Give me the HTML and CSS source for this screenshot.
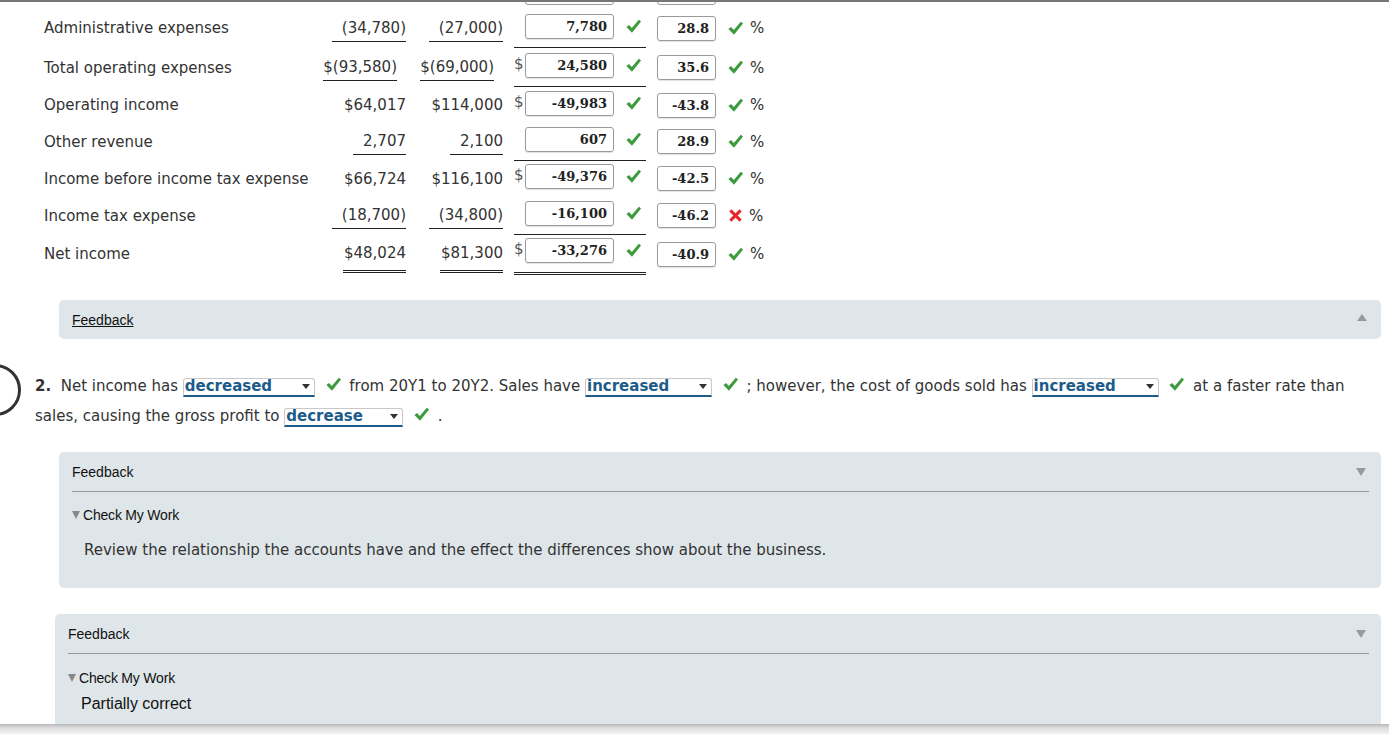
FILE: index.html
```html
<!DOCTYPE html>
<html lang="en">
<head>
    <meta charset="UTF-8">
    <title>Horizontal Analysis</title>
    <link rel="stylesheet" href="styles.css">
</head>
<body>
    <div class="page">
        <div class="stub">
            <span class="stub-box wide"></span>
            <span class="stub-box narrow"></span>
        </div>

        <div class="stmt">
            <div class="row r1">
                <div class="label">Administrative expenses</div>
                <div class="amt"><span class="ul">(34,780)</span></div>
                <div class="amt"><span class="ul">(27,000)</span></div>
                <div class="ans line"><span class="cur"></span><span class="box">7,780</span><svg class="ok" viewBox="0 0 18 18"><path d="M1.5 9.6 L4.3 7.3 L7.2 10.7 L14.6 1.8 L17 3.8 L7.4 15.6 Z"/></svg></div>
                <div class="pct"><span class="box sm">28.8</span><svg class="ok" viewBox="0 0 18 18"><path d="M1.5 9.6 L4.3 7.3 L7.2 10.7 L14.6 1.8 L17 3.8 L7.4 15.6 Z"/></svg><span class="pc">%</span></div>
            </div>
            <div class="row r2">
                <div class="label">Total operating expenses</div>
                <div class="amt"><span class="ul tight">$(93,580)</span></div>
                <div class="amt"><span class="ul tight">$(69,000)</span></div>
                <div class="ans line"><span class="cur">$</span><span class="box">24,580</span><svg class="ok" viewBox="0 0 18 18"><path d="M1.5 9.6 L4.3 7.3 L7.2 10.7 L14.6 1.8 L17 3.8 L7.4 15.6 Z"/></svg></div>
                <div class="pct"><span class="box sm">35.6</span><svg class="ok" viewBox="0 0 18 18"><path d="M1.5 9.6 L4.3 7.3 L7.2 10.7 L14.6 1.8 L17 3.8 L7.4 15.6 Z"/></svg><span class="pc">%</span></div>
            </div>
            <div class="row r3">
                <div class="label">Operating income</div>
                <div class="amt"><span>$64,017</span></div>
                <div class="amt"><span>$114,000</span></div>
                <div class="ans"><span class="cur">$</span><span class="box">-49,983</span><svg class="ok" viewBox="0 0 18 18"><path d="M1.5 9.6 L4.3 7.3 L7.2 10.7 L14.6 1.8 L17 3.8 L7.4 15.6 Z"/></svg></div>
                <div class="pct"><span class="box sm">-43.8</span><svg class="ok" viewBox="0 0 18 18"><path d="M1.5 9.6 L4.3 7.3 L7.2 10.7 L14.6 1.8 L17 3.8 L7.4 15.6 Z"/></svg><span class="pc">%</span></div>
            </div>
            <div class="row r4">
                <div class="label">Other revenue</div>
                <div class="amt"><span class="ul">2,707</span></div>
                <div class="amt"><span class="ul">2,100</span></div>
                <div class="ans line"><span class="cur"></span><span class="box">607</span><svg class="ok" viewBox="0 0 18 18"><path d="M1.5 9.6 L4.3 7.3 L7.2 10.7 L14.6 1.8 L17 3.8 L7.4 15.6 Z"/></svg></div>
                <div class="pct"><span class="box sm">28.9</span><svg class="ok" viewBox="0 0 18 18"><path d="M1.5 9.6 L4.3 7.3 L7.2 10.7 L14.6 1.8 L17 3.8 L7.4 15.6 Z"/></svg><span class="pc">%</span></div>
            </div>
            <div class="row r5">
                <div class="label">Income before income tax expense</div>
                <div class="amt"><span>$66,724</span></div>
                <div class="amt"><span>$116,100</span></div>
                <div class="ans"><span class="cur">$</span><span class="box">-49,376</span><svg class="ok" viewBox="0 0 18 18"><path d="M1.5 9.6 L4.3 7.3 L7.2 10.7 L14.6 1.8 L17 3.8 L7.4 15.6 Z"/></svg></div>
                <div class="pct"><span class="box sm">-42.5</span><svg class="ok" viewBox="0 0 18 18"><path d="M1.5 9.6 L4.3 7.3 L7.2 10.7 L14.6 1.8 L17 3.8 L7.4 15.6 Z"/></svg><span class="pc">%</span></div>
            </div>
            <div class="row r6">
                <div class="label">Income tax expense</div>
                <div class="amt"><span class="ul">(18,700)</span></div>
                <div class="amt"><span class="ul">(34,800)</span></div>
                <div class="ans line"><span class="cur"></span><span class="box">-16,100</span><svg class="ok" viewBox="0 0 18 18"><path d="M1.5 9.6 L4.3 7.3 L7.2 10.7 L14.6 1.8 L17 3.8 L7.4 15.6 Z"/></svg></div>
                <div class="pct"><span class="box sm">-46.2</span><svg class="bad" viewBox="0 0 16 16"><path d="M2.5 2.5 L13.5 13.5 M13.5 2.5 L2.5 13.5"/></svg><span class="pc">%</span></div>
            </div>
            <div class="row r7">
                <div class="label">Net income</div>
                <div class="amt"><span class="dbl">$48,024</span></div>
                <div class="amt"><span class="dbl">$81,300</span></div>
                <div class="ans dline"><span class="cur">$</span><span class="box">-33,276</span><svg class="ok" viewBox="0 0 18 18"><path d="M1.5 9.6 L4.3 7.3 L7.2 10.7 L14.6 1.8 L17 3.8 L7.4 15.6 Z"/></svg></div>
                <div class="pct"><span class="box sm">-40.9</span><svg class="ok" viewBox="0 0 18 18"><path d="M1.5 9.6 L4.3 7.3 L7.2 10.7 L14.6 1.8 L17 3.8 L7.4 15.6 Z"/></svg><span class="pc">%</span></div>
            </div>
        </div>

        <div class="feedback collapsed">
            <a class="fb-title link">Feedback</a>
            <span class="tri up"></span>
        </div>

        <div class="question">
            <span class="circle"></span>
            <b>2.</b>&nbsp; Net income has <span class="sel w-dec"><span>decreased</span><i></i></span>
            <svg class="ok" viewBox="0 0 18 18"><path d="M1.5 9.6 L4.3 7.3 L7.2 10.7 L14.6 1.8 L17 3.8 L7.4 15.6 Z"/></svg>
            from 20Y1 to 20Y2. Sales have <span class="sel w-inc"><span>increased</span><i></i></span>
            <svg class="ok" viewBox="0 0 18 18"><path d="M1.5 9.6 L4.3 7.3 L7.2 10.7 L14.6 1.8 L17 3.8 L7.4 15.6 Z"/></svg>
            ; however, the cost of goods sold has <span class="sel w-inc"><span>increased</span><i></i></span>
            <svg class="ok" viewBox="0 0 18 18"><path d="M1.5 9.6 L4.3 7.3 L7.2 10.7 L14.6 1.8 L17 3.8 L7.4 15.6 Z"/></svg>
            at a faster rate than sales, causing the gross profit to <span class="sel w-dcr"><span>decrease</span><i></i></span>
            <svg class="ok" viewBox="0 0 18 18"><path d="M1.5 9.6 L4.3 7.3 L7.2 10.7 L14.6 1.8 L17 3.8 L7.4 15.6 Z"/></svg> .
        </div>

        <div class="feedback open">
            <div class="fb-head">
                <span class="fb-title">Feedback</span>
                <span class="tri down"></span>
            </div>
            <div class="cmw"><span class="tri small"></span>Check My Work</div>
            <p class="fb-text">Review the relationship the accounts have and the effect the differences show about the business.</p>
        </div>

        <div class="feedback open last">
            <div class="fb-head">
                <span class="fb-title">Feedback</span>
                <span class="tri down"></span>
            </div>
            <div class="cmw"><span class="tri small"></span>Check My Work</div>
            <p class="partial">Partially correct</p>
        </div>
    </div>

    <div class="bottom-shade"></div>
</body>
</html>
```

FILE: styles.css
```css
html, body {
    height: 734px;
    overflow: hidden;
}

body {
    margin: 0;
    font-family: 'DejaVu Sans', Verdana, sans-serif;
    font-size: 15px;
    color: #333;
    background-color: white;
}

.page {
    border-top: 2px solid #777;
}

/* bottom edges of the row above, scrolled out of view */
.stub {
    display: flex;
    height: 3px;
    overflow: hidden;
    align-items: flex-end;
    padding-left: 525px;
}

.stub-box {
    display: block;
    height: 20px;
    border: 1px solid #999;
    border-radius: 3px;
    box-sizing: border-box;
}

.stub-box.wide {
    width: 89px;
}

.stub-box.narrow {
    width: 59px;
    margin-left: 43px;
}

/* statement table */
.stmt {
    padding-left: 44px;
    margin-top: 3px;
}

.row {
    display: flex;
    align-items: center;
}

.r1 { height: 40px; }
.r2 { height: 39px; }
.r3 { height: 36px; }
.r4 { height: 37px; }
.r5 { height: 37px; }
.r6 { height: 37px; }
.r7 { height: 40px; }

.label {
    width: 276px;
}

.amt {
    display: flex;
    justify-content: flex-end;
    width: 86px;
}

.amt + .amt {
    width: 97px;
}

.ul {
    padding: 4px 0 4px 10px;
    border-bottom: 1px solid #222;
}

.ul.tight {
    padding-left: 0;
    margin-right: 9px;
}

.dbl {
    padding: 8px 0 8px 1px;
    border-bottom: 3px double #222;
}

.ans {
    display: flex;
    align-items: center;
    width: 132px;
    margin-left: 11px;
    padding: 5px 0 8px;
    border-bottom: 1px solid transparent;
}

.ans.line {
    border-bottom-color: #222;
}

.ans.dline {
    border-bottom: 3px double #222;
    padding-bottom: 9px;
}

.cur {
    width: 11px;
    color: #555;
    margin-top: -3px;
}

.box {
    display: block;
    width: 89px;
    height: 25px;
    box-sizing: border-box;
    border: 1px solid #9a9a9a;
    border-radius: 3px;
    box-shadow: 0 1px 1px rgba(0, 0, 0, 0.12);
    padding-right: 6px;
    text-align: right;
    font-family: 'DejaVu Serif', Georgia, serif;
    font-weight: bold;
    font-size: 13px;
    line-height: 23px;
    color: #222;
}

.box.sm {
    width: 59px;
}

.pct {
    display: flex;
    align-items: center;
    margin-left: 11px;
}

.ok {
    width: 17px;
    height: 17px;
    fill: #3d9b3d;
    margin-left: 11px;
}

.bad {
    width: 15px;
    height: 15px;
    stroke: #e8262a;
    stroke-width: 3.2;
    margin-left: 12px;
}

.pc {
    margin-left: 6px;
}

/* feedback panels */
.feedback {
    background-color: #dfe6e9;
    border-radius: 5px;
    margin-left: 59px;
    width: 1322px;
    box-sizing: border-box;
    font-family: 'Liberation Sans', Arial, sans-serif;
    font-size: 14px;
    color: #111;
}

.feedback.collapsed {
    display: flex;
    align-items: center;
    justify-content: space-between;
    height: 39px;
    margin-top: 26px;
    padding: 0 14px 0 13px;
}

.fb-title.link {
    text-decoration: underline;
    color: #111;
}

.tri {
    display: inline-block;
    width: 0;
    height: 0;
    border-left: 5px solid transparent;
    border-right: 5px solid transparent;
}

.tri.up {
    border-bottom: 7px solid #999;
    margin-top: -4px;
}

.tri.down {
    border-top: 8px solid #999;
}

.tri.small {
    border-left-width: 4px;
    border-right-width: 4px;
    border-top: 8px solid #888;
    margin-right: 3px;
    vertical-align: 1px;
}

.feedback.open {
    margin-top: 21px;
    padding: 0 12px 1px 13px;
    height: 136px;
}

.fb-head {
    display: flex;
    justify-content: space-between;
    align-items: center;
    height: 39px;
    border-bottom: 1px solid #999;
    padding-right: 3px;
}

.cmw {
    margin-top: 14px;
    line-height: 18px;
    letter-spacing: -0.2px;
}

.fb-text {
    margin: 17px 0 0 12px;
    font-family: 'DejaVu Sans', Verdana, sans-serif;
    font-size: 15px;
    color: #333;
}

.feedback.last {
    margin-top: 26px;
    margin-left: 55px;
    width: 1326px;
    height: 140px;
}

.feedback.last .fb-head {
    height: 39px;
}

.feedback.last .cmw {
    margin-top: 15px;
}

.partial {
    margin: 8px 0 0 13px;
    font-size: 16px;
}

/* question 2 */
.question {
    position: relative;
    margin: 32px 40px 0 35px;
    line-height: 30px;
}

.circle {
    position: absolute;
    left: -66px;
    top: -7px;
    width: 46px;
    height: 46px;
    border: 3px solid #333;
    border-radius: 50%;
}

.sel {
    display: inline-flex;
    justify-content: space-between;
    align-items: center;
    height: 19px;
    box-sizing: border-box;
    border: 1px solid #c8c8c8;
    border-bottom: 2px solid #1d5b8a;
    border-radius: 3px 3px 0 0;
    padding: 0 4px 0 1px;
    vertical-align: 0;
    font-weight: bold;
    color: #1d5b8a;
    line-height: 17px;
}

.sel i {
    width: 0;
    height: 0;
    border-left: 4px solid transparent;
    border-right: 4px solid transparent;
    border-top: 5px solid #333;
}

.w-dec { width: 132px; }
.w-inc { width: 127px; }
.w-dcr { width: 119px; }

.question .ok {
    margin: 0 3px 0 5px;
    vertical-align: -2px;
}

.bottom-shade {
    position: fixed;
    left: 0;
    right: 0;
    bottom: 0;
    height: 10px;
    background: linear-gradient(#b9b9b9, #dedede 40%, #f2f2f2);
}
```
